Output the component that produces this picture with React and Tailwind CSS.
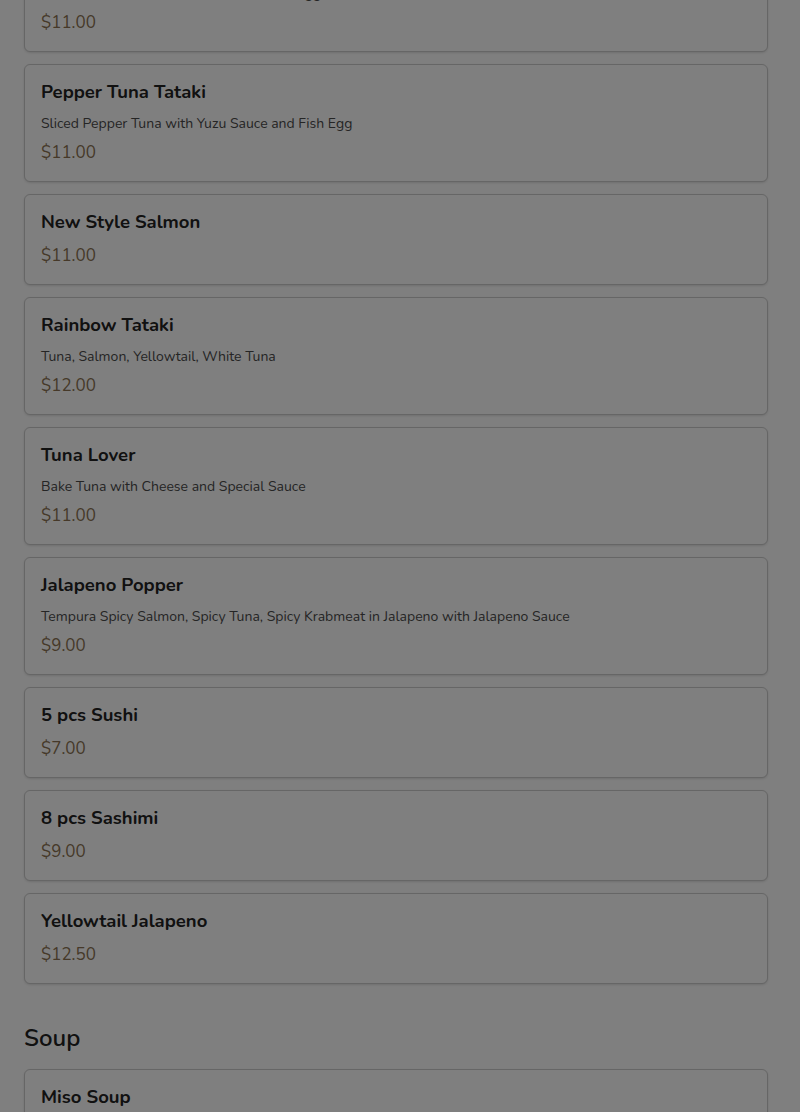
const items = [
  { name: 'Salmon Tataki', desc: 'Sliced Salmon with Yuzu Sauce and Fish Egg', price: '$11.00' },
  { name: 'Pepper Tuna Tataki', desc: 'Sliced Pepper Tuna with Yuzu Sauce and Fish Egg', price: '$11.00' },
  { name: 'New Style Salmon', price: '$11.00' },
  { name: 'Rainbow Tataki', desc: 'Tuna, Salmon, Yellowtail, White Tuna', price: '$12.00' },
  { name: 'Tuna Lover', desc: 'Bake Tuna with Cheese and Special Sauce', price: '$11.00' },
  { name: 'Jalapeno Popper', desc: 'Tempura Spicy Salmon, Spicy Tuna, Spicy Krabmeat in Jalapeno with Jalapeno Sauce', price: '$9.00' },
  { name: '5 pcs Sushi', price: '$7.00' },
  { name: '8 pcs Sashimi', price: '$9.00' },
  { name: 'Yellowtail Jalapeno', price: '$12.50' },
];

const soups = [{ name: 'Miso Soup', price: '$3.00' }];

function MenuCard({ item }) {
  return (
    <div className="border border-[#cccccc] rounded-md bg-white p-4 shadow-sm">
      <h3 className="text-[18.5px] leading-[22px] font-bold text-[#222222] mb-[11px]">{item.name}</h3>
      {item.desc && (
        <p className="text-[14px] leading-5 text-[#4a4a4a] mb-[7px]">{item.desc}</p>
      )}
      <p className="text-[17px] leading-6 text-[#8c7352]">{item.price}</p>
    </div>
  );
}

export default function App() {
  return (
    <div className="relative h-[1112px] overflow-hidden bg-white" style={{ fontFamily: '"Nunito", "Lato", sans-serif' }}>
      <div className="pl-6 pr-8 mt-[-66px]">
        <div className="flex flex-col gap-3">
          {items.map((item) => (
            <MenuCard key={item.name} item={item} />
          ))}
        </div>

        <h2 className="text-[24px] leading-8 font-semibold text-[#222222] mt-[38px] mb-[15px]">Soup</h2>
        <div className="flex flex-col gap-3">
          {soups.map((item) => (
            <MenuCard key={item.name} item={item} />
          ))}
        </div>
      </div>

      {/* dimmed overlay */}
      <div className="fixed inset-0 bg-black/50" />
    </div>
  );
}
